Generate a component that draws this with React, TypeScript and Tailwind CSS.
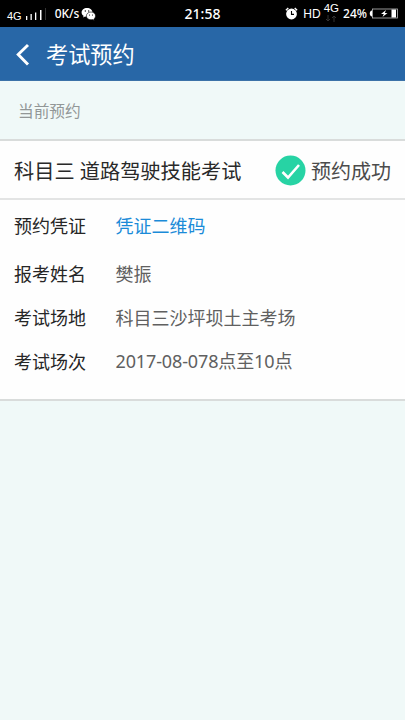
import React from "react";

const rows = [
  { label: "预约凭证", value: "凭证二维码", link: true, box: "h-[52px]", shift: "" },
  { label: "报考姓名", value: "樊振", link: false, box: "h-11", shift: "" },
  { label: "考试场地", value: "科目三沙坪坝土主考场", link: false, box: "h-11", shift: "" },
  { label: "考试场次", value: "2017-08-078点至10点", link: false, box: "h-11", shift: "pb-[3px] tracking-[-0.13px]" },
];

function Signal() {
  return (
    <svg className="ml-[3px] w-[18px] h-3" viewBox="0 0 18 12" fill="#fff">
      <rect x="1" y="7" width="1.300" height="4" />
      <rect x="5.500" y="5" width="1.300" height="6" />
      <rect x="10" y="3.500" width="1.300" height="7.500" />
      <rect x="15" y="1" width="1.500" height="10" />
    </svg>
  );
}

function WeChat() {
  return (
    <svg className="ml-[2px] w-[15px] h-[14px]" viewBox="0 0 15 14">
      <path d="M6 1C2.900 1 .6 2.900.6 5.400c0 1.400.8 2.600 2 3.400l-.5 1.700 2-1c.6.2 1.200.3 1.900.3 3.100 0 5.500-2 5.500-4.400S9.100 1 6 1z" fill="#fff" />
      <path d="M10 5C7.400 5 5.400 6.700 5.400 8.900s2 3.900 4.600 3.900c.5 0 1-.1 1.500-.2l1.800.9-.5-1.500c1-.7 1.700-1.800 1.700-3.100C14.500 6.700 12.500 5 10 5z" fill="#fff" stroke="#000" strokeWidth=".6" />
      <circle cx="4.300" cy="4" r=".65" />
      <circle cx="7.700" cy="4" r=".65" />
      <circle cx="8.500" cy="8" r=".55" />
      <circle cx="11.500" cy="8" r=".55" />
    </svg>
  );
}

function Alarm() {
  return (
    <svg className="w-[13px] h-[13px]" viewBox="0 0 13 13" fill="none">
      <circle cx="6.500" cy="7" r="5.400" fill="#fff" />
      <path d="M.9 3.300 3.300 1.100M12.100 3.300 9.700 1.100" stroke="#fff" strokeWidth="1.400" />
      <path d="M6.500 3.900v3.500H9" stroke="#000" strokeWidth="1.100" />
    </svg>
  );
}

function Battery() {
  return (
    <svg className="ml-[2px] w-[29px] h-[11px]" viewBox="0 0 29 11" fill="none">
      <path d="M3 2.500C0 2.800 0 8.200 3 8.500z" fill="#fff" />
      <rect x="3.500" y="1" width="25" height="9" stroke="#bbb" strokeWidth=".8" />
      <rect x="22.500" y="1.500" width="4.500" height="8" fill="#fff" />
      <path d="M17 2l-5 4h2.800L13.500 9l5-4h-2.700z" fill="#fff" />
    </svg>
  );
}

function StatusBar() {
  return (
    <div className="h-[27px] bg-black text-white flex items-center justify-between px-[7px] font-['Noto_Sans',sans-serif]">
      <div className="w-[150px] flex items-center whitespace-nowrap">
        <span className="pt-1 text-[11px] leading-4 font-['Liberation_Sans',sans-serif]">4G</span>
        <div className="pt-0.5">
          <Signal />
        </div>
        <span className="ml-0.5 w-px h-3 bg-[#333]" />
        <span className="ml-[9px] text-[12px] leading-4 font-medium tracking-[-0.1px]">0K/s</span>
        <WeChat />
      </div>
      <span className="text-[14px] leading-5 font-medium">21:58</span>
      <div className="w-[150px] flex items-center justify-end whitespace-nowrap">
        <Alarm />
        <span className="ml-[5px] text-[12px] leading-4 font-['Liberation_Sans',sans-serif]">HD</span>
        <div className="ml-[3px] pb-[3px] flex flex-col items-center">
          <span className="text-[11.500px] leading-[13px] font-['Liberation_Sans',sans-serif]">4G</span>
          <svg className="w-3 h-[7px]" viewBox="0 0 12 7" fill="none" stroke="#333" strokeWidth="1">
            <path d="M3 0v6M1 4l2 2 2-2M9 7V1M7 3l2-2 2 2" />
          </svg>
        </div>
        <span className="ml-[4px] text-[12px] leading-4 font-medium">24%</span>
        <Battery />
      </div>
    </div>
  );
}

export default function App() {
  return (
    <div className="w-full h-[720px] overflow-hidden bg-[#f0f9f8] font-['Noto_Sans','Noto_Sans_CJK_SC',sans-serif]">
      <StatusBar />
      <header className="h-[54px] bg-[#2867a7] border-b border-[#3c72a8] text-white flex items-center pl-4">
        <svg className="w-[14px] h-6" viewBox="0 0 14 24" fill="none" stroke="#fff" strokeWidth="2.900">
          <path d="M12 3 2.200 12.500 12 22.500" />
        </svg>
        <h1 className="ml-4 pt-0.5 text-[22.200px] leading-8 font-normal">考试预约</h1>
      </header>

      <div className="h-[58px] flex items-center pt-[3px] pl-[18px] text-[15.700px] text-[#929797]">当前预约</div>

      <main className="bg-[#fefefe] border-t-2 border-b-2 border-[#d9dcdb]">
        <div className="h-[59px] border-b-2 border-[#e3e4e4] flex items-center justify-between pt-[3px] pl-[14px] pr-[14px] whitespace-nowrap">
          <h2 className="text-[20.200px] text-[#292929]">科目三 道路驾驶技能考试</h2>
          <div className="flex items-center pt-px">
            <svg className="mb-[3px] w-[31px] h-[31px]" viewBox="0 0 31 31" fill="none">
              <circle cx="15.500" cy="15.500" r="15" fill="#27d3a4" />
              <path d="M7.500 17 13 22.500 24 10" stroke="#fff" strokeWidth="2.600" />
            </svg>
            <span className="ml-[5px] text-[20px] text-[#4b4b4b]">预约成功</span>
          </div>
        </div>
        <dl className="h-[199px] text-[18px] leading-6">
          {rows.map((row) => (
            <div key={row.label} className={`${row.box} flex items-center pl-[14px] whitespace-nowrap`}>
              <dt className="w-[101.500px] text-[#262626]">{row.label}</dt>
              <dd className={`${row.shift} ${row.link ? "text-[#1b8bd8]" : "text-[#606060]"}`}>{row.value}</dd>
            </div>
          ))}
        </dl>
      </main>
    </div>
  );
}
